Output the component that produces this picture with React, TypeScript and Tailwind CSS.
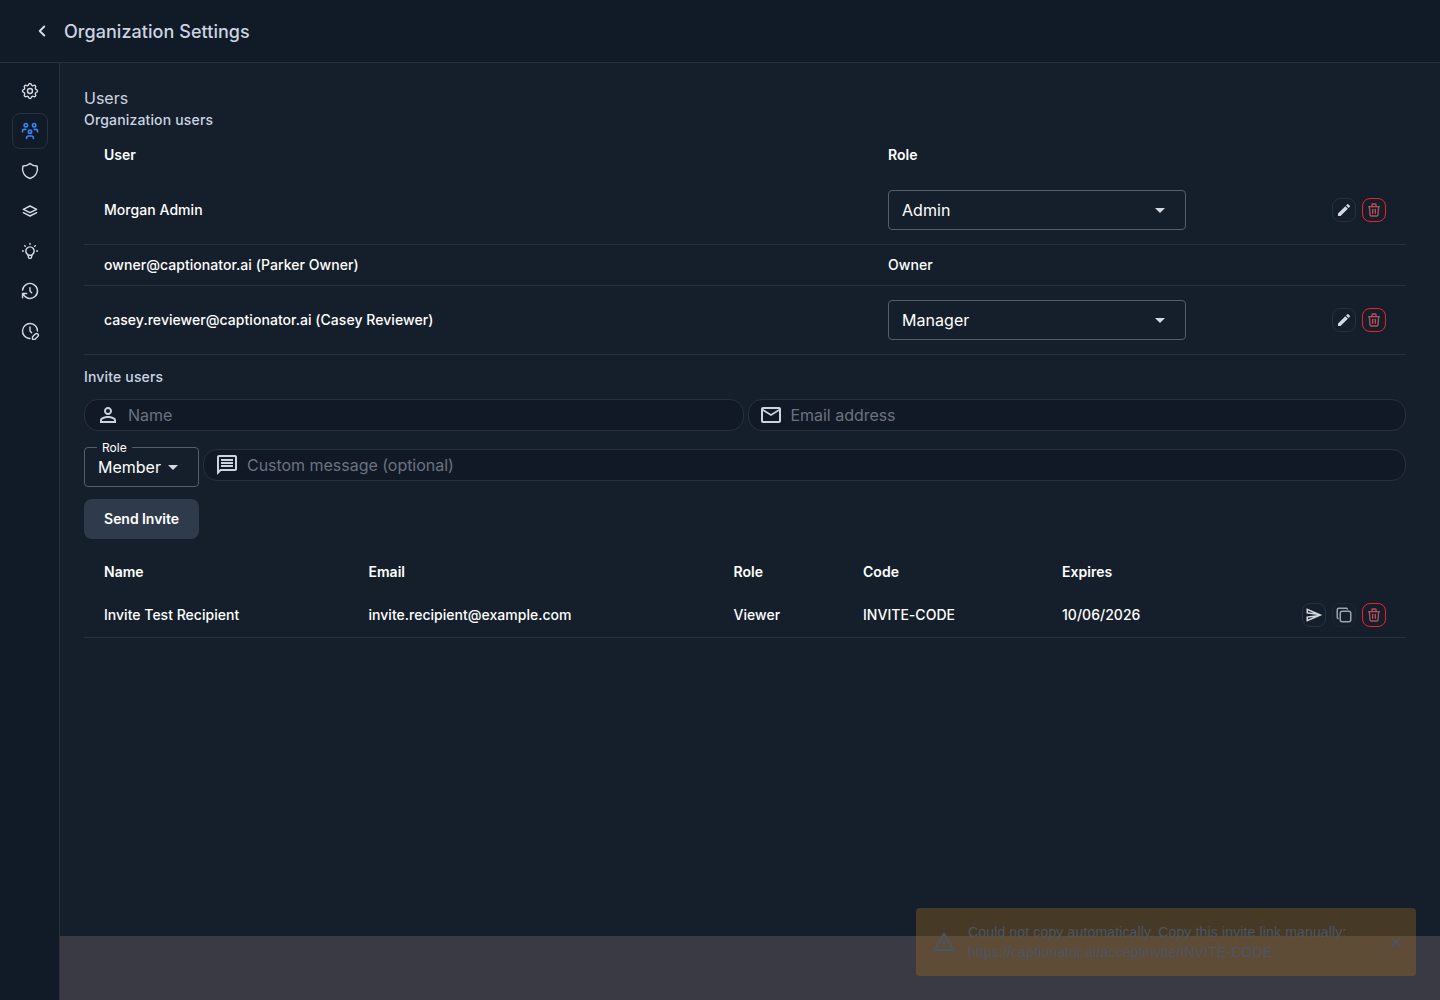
import { MdArrowDropDown, MdClose, MdEdit, MdMailOutline, MdOutlineMessage, MdOutlineSend, MdPersonOutline, MdWarningAmber } from "react-icons/md";
import { TbChevronLeft, TbClockEdit, TbCopy, TbHistory, TbBulb, TbSettings, TbShield, TbStack, TbTrash, TbUsersGroup } from "react-icons/tb";

const NAV_ICONS = [TbSettings, TbUsersGroup, TbShield, TbStack, TbBulb, TbHistory, TbClockEdit];

const INVITE_COLS = "grid grid-cols-[264.5px_365px_129.5px_199px_1fr] px-5 tracking-[0.02px]";

function IconBtn({ children, danger, dim }: { children: React.ReactNode; danger?: boolean; dim?: boolean }) {
  return (
    <button
      className={
        danger
          ? "flex h-6 w-6 items-center justify-center rounded-lg border border-[#ef1f2b] text-[#b85058]"
          : dim
            ? "flex h-6 w-6 items-center justify-center rounded-lg border border-[#1c2735] text-[#9aa5b4]"
            : "flex h-6 w-6 items-center justify-center rounded-lg border border-[#263140] text-[#d5dae2]"
      }
    >
      {children}
    </button>
  );
}

function RoleSelect({ value }: { value: string }) {
  return (
    <div className="flex h-10 w-[298px] items-center justify-between rounded border border-[#565d69] pl-[13px] pr-[13px] text-base font-normal text-white">
      <span>{value}</span>
      <MdArrowDropDown className="text-[24px] text-[#d5dae2]" />
    </div>
  );
}

function FieldPill({ icon, label, className }: { icon: React.ReactNode; label: string; className: string }) {
  return (
    <div className={`flex h-8 items-center rounded-[14px] border border-[#263140] bg-[#111927] text-base font-normal tracking-[-0.03px] text-[#6b7280] ${className}`}>
      {icon}
      <span>{label}</span>
    </div>
  );
}

export default function App() {
  return (
    <div className="relative flex h-[1000px] flex-col overflow-hidden bg-[#151f2b] text-sm font-medium text-white [font-family:Inter,sans-serif]">
      <header className="flex h-[63px] shrink-0 items-center border-b border-[#263140] bg-[#111a27] pl-[33px]">
        <TbChevronLeft className="text-[18px] text-[#d5dae2]" strokeWidth={2.6} />
        <h1 className="ml-[13px] mt-[2px] text-lg tracking-[0.05px] text-[#cbd5e1]">Organization Settings</h1>
      </header>

      <div className="flex min-h-0 flex-1">
        <nav className="flex w-[60px] shrink-0 flex-col items-center gap-1 border-r border-[#263140] bg-[#111a27] pt-[10px]">
          {NAV_ICONS.map((Icon, i) => (
            <div
              key={i}
              className={
                i === 1
                  ? "flex h-9 w-9 items-center justify-center rounded-lg border border-[#263140] text-[#3b82f6]"
                  : "flex h-9 w-9 items-center justify-center text-[#d5dae2]"
              }
            >
              <Icon className="text-[20px]" strokeWidth={i === 1 ? 2 : 1.7} />
            </div>
          ))}
        </nav>

        <div className="flex min-w-0 flex-1 flex-col">
          <main className="min-h-0 flex-1 pl-6 pr-[34px] pt-[23px]">
            <h2 className="text-base font-normal leading-[24px] text-[#cbd5e1]">Users</h2>
            <h3 className="text-sm leading-[20px] tracking-[0.16px] text-[#cbd5e1]">Organization users</h3>

            <div className="grid h-[45px] grid-cols-[784px_1fr] items-center px-5 pt-[5px] font-semibold">
              <span>User</span>
              <span>Role</span>
            </div>
            <div className="grid h-[70px] grid-cols-[784px_298px_1fr] items-center border-b border-[#263140] px-5 tracking-[0.05px]">
              <span>Morgan Admin</span>
              <RoleSelect value="Admin" />
              <div className="flex justify-end gap-[6px]">
                <IconBtn><MdEdit className="text-[16px]" /></IconBtn>
                <IconBtn danger><TbTrash className="text-[16px]" /></IconBtn>
              </div>
            </div>
            <div className="grid h-[41px] grid-cols-[784px_1fr] items-center border-b border-[#263140] px-5 tracking-[0.05px]">
              <span>owner@captionator.ai (Parker Owner)</span>
              <span>Owner</span>
            </div>
            <div className="grid h-[69px] grid-cols-[784px_298px_1fr] items-center border-b border-[#263140] px-5 tracking-[0.05px]">
              <span>casey.reviewer@captionator.ai (Casey Reviewer)</span>
              <RoleSelect value="Manager" />
              <div className="flex justify-end gap-[6px]">
                <IconBtn><MdEdit className="text-[16px]" /></IconBtn>
                <IconBtn danger><TbTrash className="text-[16px]" /></IconBtn>
              </div>
            </div>

            <h3 className="mt-3 text-sm leading-[20px] tracking-[0.16px] text-[#cbd5e1]">Invite users</h3>
            <div className="mt-3 flex gap-1">
              <FieldPill
                className="flex-1 gap-[8px] pl-[11px]"
                icon={<MdPersonOutline className="text-[24px] text-[#cbd5e1]" />}
                label="Name"
              />
              <FieldPill
                className="flex-1 gap-[8px] pl-[10px]"
                icon={<MdMailOutline className="text-[24px] text-[#cbd5e1]" />}
                label="Email address"
              />
            </div>

            <div className="mt-4 flex gap-1">
              <div className="relative flex h-10 w-[115px] shrink-0 items-center rounded border border-[#565d69] pl-[13px] text-base font-normal text-white">
                <span className="absolute -top-[7px] left-[12px] bg-[#151f2b] px-[5px] text-xs leading-[14px]">Role</span>
                <span>Member</span>
                <MdArrowDropDown className="text-[24px] text-[#d5dae2]" />
              </div>
              <FieldPill
                className="mt-[2px] flex-1 gap-[8px] pl-[11px]"
                icon={<MdOutlineMessage className="text-[24px] text-[#cbd5e1]" />}
                label="Custom message (optional)"
              />
            </div>

            <button className="mt-3 h-10 w-[115px] rounded-lg bg-[#2f3a4b] font-semibold tracking-[-0.05px] text-white">Send Invite</button>

            <div className={`${INVITE_COLS} mt-[13px] h-[40px] items-center font-semibold`}>
              <span>Name</span>
              <span>Email</span>
              <span>Role</span>
              <span>Code</span>
              <span>Expires</span>
            </div>
            <div className={`${INVITE_COLS} h-[46px] items-center border-b border-[#263140]`}>
              <span>Invite Test Recipient</span>
              <span>invite.recipient@example.com</span>
              <span>Viewer</span>
              <span>INVITE-CODE</span>
              <div className="flex items-center justify-between">
                <span>10/06/2026</span>
                <div className="flex gap-[6px]">
                  <IconBtn><MdOutlineSend className="text-[18px]" /></IconBtn>
                  <IconBtn dim><TbCopy className="text-[18px]" /></IconBtn>
                  <IconBtn danger><TbTrash className="text-[16px]" /></IconBtn>
                </div>
              </div>
            </div>
          </main>
          <div className="h-16 shrink-0 bg-[#3a3a44]" />
        </div>
      </div>

      <div className="absolute bottom-6 right-6 flex h-[68px] w-[500px] items-center rounded bg-[#ae731b]/[.32] pl-[16px] pr-[11px] text-sm font-normal leading-[20px] tracking-[0.15px] text-[#4b5563] [font-family:'Liberation_Sans',sans-serif]">
        <MdWarningAmber className="shrink-0 text-[24px]" />
        <div className="ml-[12px] flex-1">
          <div>Could not copy automatically. Copy this invite link manually:</div>
          <div>https://captionator.ai/acceptinvite/INVITE-CODE</div>
        </div>
        <MdClose className="shrink-0 text-[18px]" />
      </div>
    </div>
  );
}
